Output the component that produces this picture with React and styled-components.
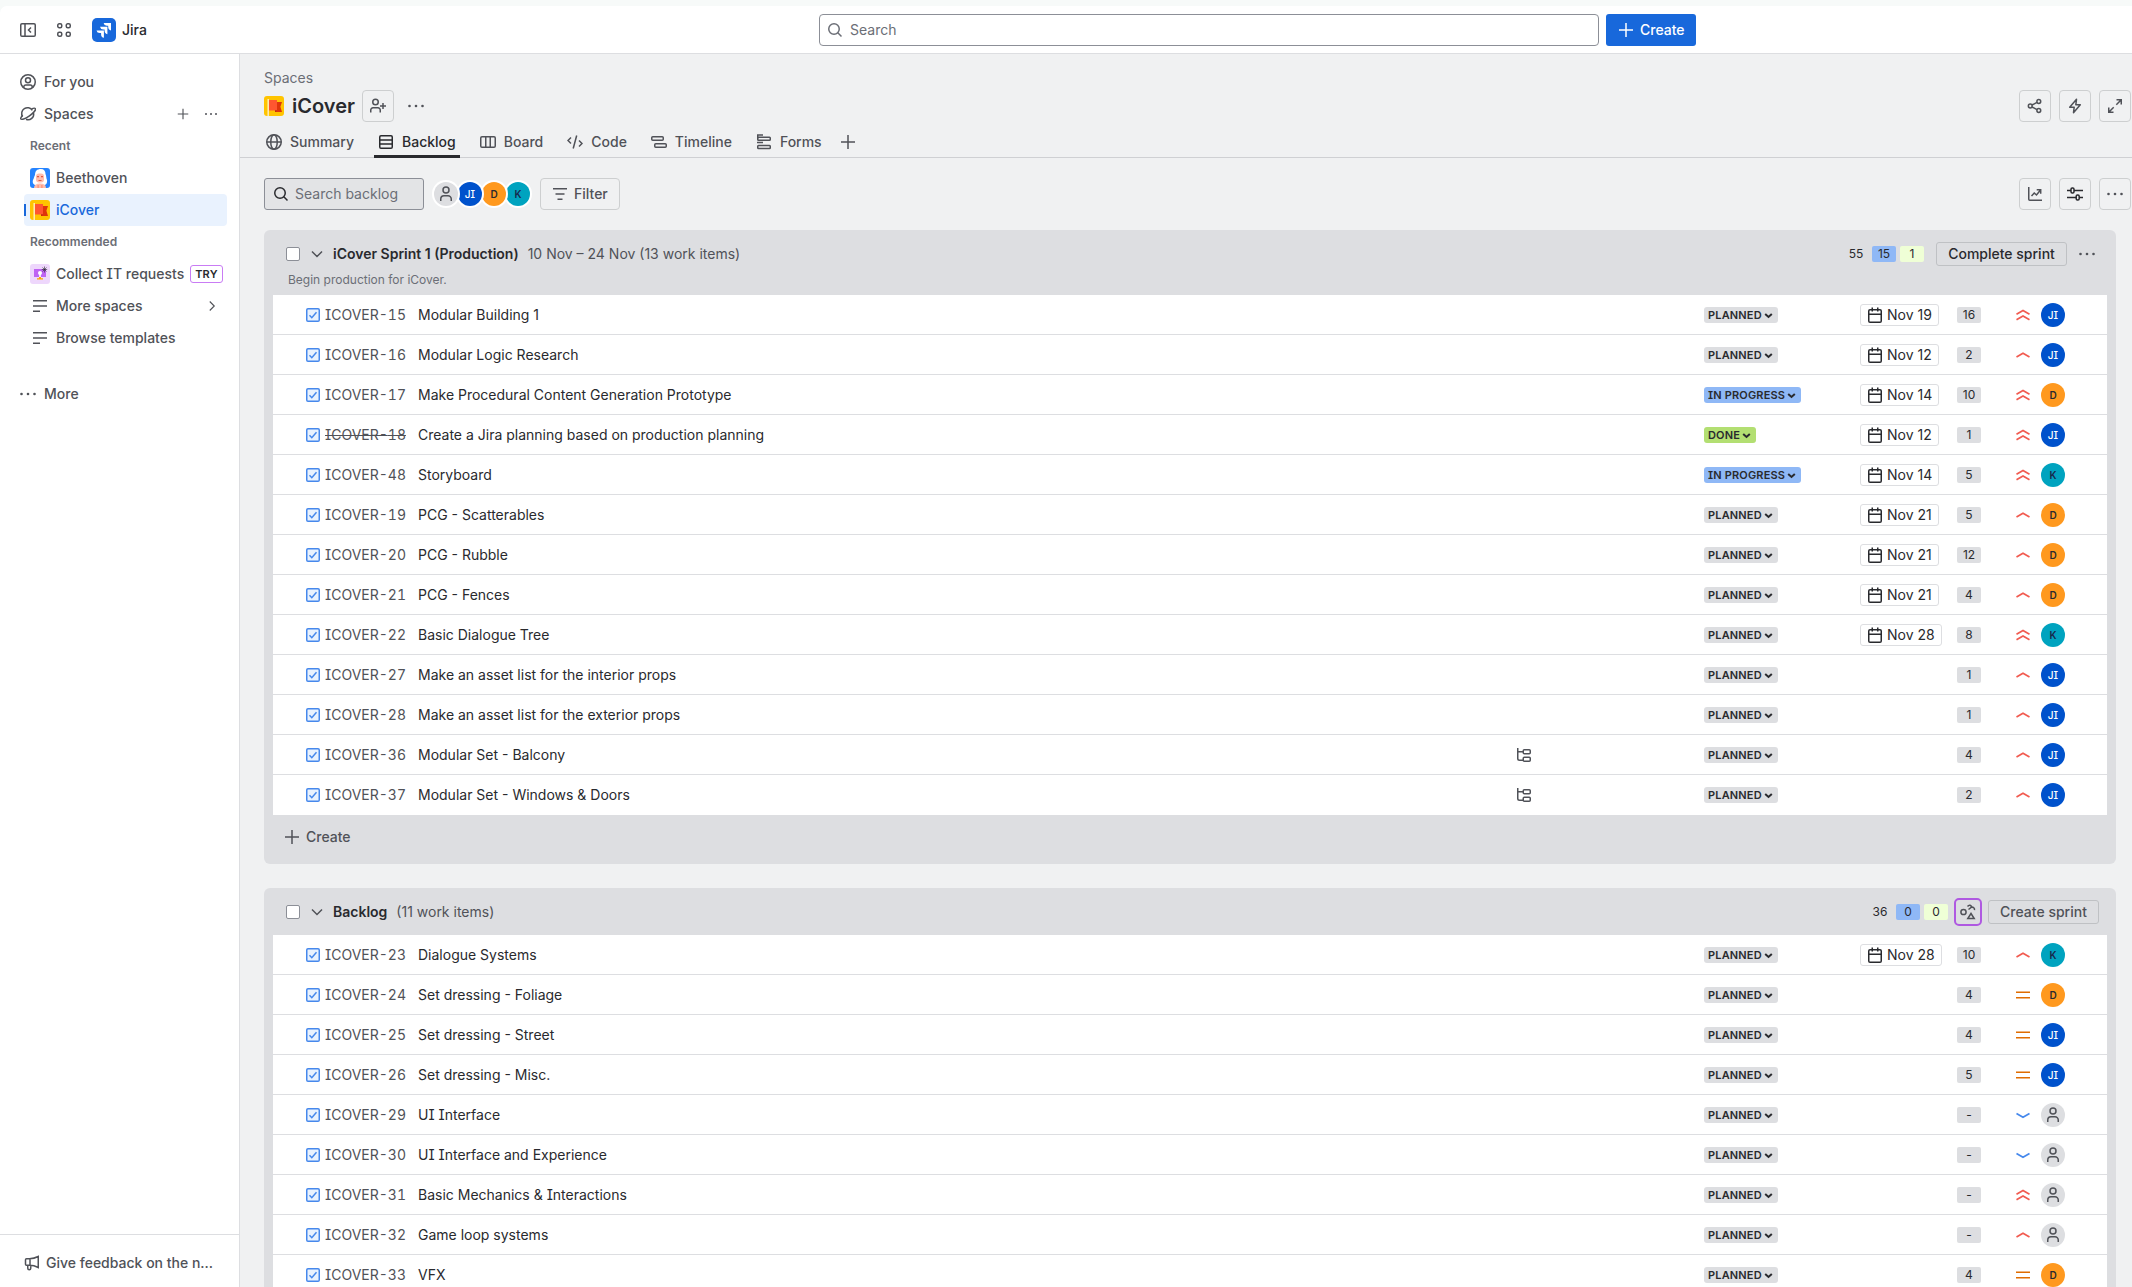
import React from 'react'
import styled, { createGlobalStyle } from 'styled-components'


const GlobalStyle = createGlobalStyle`
    * {
        box-sizing: border-box;
    }
    body {
        margin: 0;
        overflow: hidden;
        background: #f7faf9;
        color: #292a2e;
        font: 400 14px/20px Inter, sans-serif;
        font-feature-settings: "cv08";
    }
    button {
        font: inherit;
        font-feature-settings: inherit;
    }
`
const Page = styled.div`
    height: 100vh;
    padding-top: 6px;
    display: flex;
    flex-direction: column;
`
const Svg = styled.svg`
    display: block;
    flex: none;
    fill: none;
    stroke: ${p => p.$stroke || 'currentColor'};
    stroke-width: ${p => p.$weight || 1.5};
`

/* ---------- top bar ---------- */
const TopBar = styled.header`
    flex: none;
    height: 48px;
    display: grid;
    grid-template-columns: 819px 780px 1fr;
    align-items: center;
    background: #fff;
    border-bottom: 1px solid #dddee1;
    border-top-left-radius: 7px;
`
const TopLeft = styled.div`
    display: flex;
    align-items: center;
    padding-left: 20px;
    color: #505258;
`
const GridIconWrap = styled.div`
    margin: 0 20px;
`
const Logo = styled.div`
    display: flex;
    align-items: center;
    gap: 6px;
    color: #292a2e;
    font-weight: 500;
`
const GlobalSearch = styled.div`
    height: 32px;
    display: flex;
    align-items: center;
    gap: 7px;
    padding-left: 7px;
    border: 1px solid #8c8f97;
    border-radius: 4px;
    color: #6b6e76;
`
const CreateButton = styled.button`
    width: 90px;
    height: 32px;
    margin-left: 7px;
    padding: 0 0 0 12px;
    display: flex;
    align-items: center;
    gap: 6px;
    border: 0;
    border-radius: 3px;
    background: #1868db;
    color: #fff;
    font-weight: 500;
`

/* ---------- sidebar ---------- */
const Body = styled.div`
    flex: 1;
    min-height: 0;
    display: flex;
`
const Sidebar = styled.nav`
    width: 240px;
    flex: none;
    display: flex;
    flex-direction: column;
    background: #fff;
    border-right: 1px solid #dddee1;
    color: #505258;
    font-weight: 500;
    white-space: nowrap;
`
const SideList = styled.div`
    flex: 1;
    padding: 12px 12px 0;
`
const SideItem = styled.div`
    height: 32px;
    display: flex;
    align-items: center;
    gap: 8px;
    padding-left: 8px;
    margin-top: ${p => p.$gap || 0}px;
`
const SideActions = styled.div`
    display: flex;
    align-items: center;
    gap: 16px;
    margin-left: auto;
    padding-right: 10px;
`
const SideHeading = styled.div`
    height: 32px;
    padding-left: 18px;
    font-size: 12px;
    font-weight: 600;
    line-height: 32px;
    color: #6b6e76;
`
const SubItem = styled.div`
    height: 32px;
    margin-left: 12px;
    padding-right: 4px;
    display: flex;
    align-items: center;
    border-radius: 4px;
    background: ${p => (p.$active ? '#e9f2fe' : 'transparent')};
    color: ${p => (p.$active ? '#1868db' : 'inherit')};
`
const ActiveBar = styled.div`
    width: 2px;
    height: 12px;
    background: ${p => (p.$on ? '#1868db' : 'transparent')};
`
const SubIcon = styled.div`
    width: 20px;
    margin: 0 6px 0 4px;
    display: flex;
    justify-content: center;
`
const Try = styled.span`
    height: 18px;
    margin-left: 6px;
    padding: 0 4px;
    border: 1px solid #c97cf4;
    border-radius: 3px;
    color: #292a2e;
    font-size: 11px;
    font-weight: 600;
    letter-spacing: 0.165px;
    line-height: 16px;
`
const Push = styled.div`
    margin-left: auto;
    padding-right: 5px;
`
const Feedback = styled.div`
    height: 53px;
    display: flex;
    align-items: center;
    gap: 6px;
    padding: 4px 0 0 24px;
    border-top: 1px solid #dddee1;
`

/* ---------- main ---------- */
const Main = styled.main`
    flex: 1;
    min-width: 0;
    background: #f0f1f2;
    overflow: hidden;
`
const Head = styled.div`
    padding: 14px 1px 0 24px;
`
const Crumb = styled.div`
    color: #6b6e76;
`
const TitleRow = styled.div`
    height: 36px;
    display: flex;
    align-items: center;
    color: #505258;
`
const Title = styled.h1`
    margin: 0 7px 0 8px;
    font-size: 20px;
    font-weight: 600;
    line-height: 24px;
    color: #292a2e;
`
const IconButton = styled.button`
    width: 32px;
    height: 32px;
    padding: 0;
    display: flex;
    align-items: center;
    justify-content: center;
    border: 1px solid #cdcfd0;
    border-radius: 4px;
    background: transparent;
    color: ${p => (p.$dark ? '#292a2e' : '#505258')};
`
const TitleDots = styled.div`
    margin-left: 14px;
`
const ButtonGroup = styled.div`
    display: flex;
    gap: 8px;
    margin-left: auto;
`
const Tabs = styled.div`
    height: 34px;
    display: flex;
    align-items: stretch;
    gap: 16px;
    padding-left: 22px;
    border-bottom: 1px solid #cfd0d3;
    color: #505258;
    font-weight: 500;
`
const Tab = styled.div`
    display: flex;
    align-items: center;
    gap: 8px;
    height: 34px;
    padding: 4px 4px 0;
    color: ${p => (p.$active ? '#292a2e' : 'inherit')};
    border-bottom: 3px solid ${p => (p.$active ? '#292a2e' : 'transparent')};
`
const AddTab = styled(Tab)`
    margin-left: -6px;
`
const Toolbar = styled.div`
    height: 72px;
    padding: 0 1px 0 24px;
    display: flex;
    align-items: center;
`
const BacklogSearch = styled.div`
    width: 160px;
    height: 32px;
    display: flex;
    align-items: center;
    gap: 6px;
    padding-left: 8px;
    border: 1px solid #8c8f97;
    border-radius: 3px;
    background: #e3e4e6;
    color: #6b6e76;
`
const SearchGlyph = styled.span`
    color: #292a2e;
`
const AvatarStack = styled.div`
    display: flex;
    margin: 0 12px 0 8px;
    isolation: isolate;
`
const AvatarRing = styled.div`
    position: relative;
    z-index: ${p => p.$z};
    margin-right: -4px;
    padding: 2px;
    border-radius: 50%;
    background: #fff;

    &:last-child {
        margin-right: 8px;
    }
`
const Avatar = styled.div`
    width: 24px;
    height: 24px;
    display: flex;
    align-items: center;
    justify-content: center;
    border-radius: 50%;
    background: ${p => p.$bg};
    color: ${p => p.$fg};
    font-size: 10px;
    font-weight: ${p => p.$weight};
    line-height: 24px;
`
const FilterButton = styled.button`
    width: 80px;
    height: 32px;
    margin-left: -12px;
    padding: 0 0 0 11px;
    display: flex;
    align-items: center;
    gap: 6px;
    border: 1px solid #cdcfd0;
    border-radius: 4px;
    background: transparent;
    color: #505258;
    font-weight: 500;
`

/* ---------- sprint panels ---------- */
const Panel = styled.section`
    margin: 0 16px 24px 24px;
    padding: 0 9px;
    border-radius: 6px;
    background: #dddee1;
`
const PanelHead = styled.div`
    height: ${p => (p.$tall ? 65 : 47)}px;
    padding: 12px 8px 0 13px;
`
const PanelLine = styled.div`
    height: 24px;
    display: flex;
    align-items: center;
    color: #505258;
`
const Checkbox = styled.div`
    width: 14px;
    height: 14px;
    border: 1px solid #8c8f97;
    border-radius: 2px;
    background: #fff;
`
const PanelToggle = styled.div`
    margin: 0 8px 0 9px;
`
const PanelTitle = styled.span`
    margin-right: 9px;
    color: #292a2e;
    font-weight: 600;
`
const Goal = styled.div`
    padding: 4px 0 0 2px;
    color: #6b6e76;
    font-size: 12px;
`
const Stats = styled.div`
    display: flex;
    align-items: center;
    gap: 4px;
    margin-left: auto;
`
const Count = styled.span`
    min-width: 24px;
    height: 16px;
    padding: 0 4px;
    border-radius: 2px;
    background: ${p => p.$bg || 'transparent'};
    color: #292a2e;
    font-size: 12px;
    line-height: 16px;
    text-align: center;
`
const SmallButton = styled.button`
    height: 24px;
    padding: 0;
    width: ${p => p.$w}px;
    border: 1px solid #bfc1c4;
    border-radius: 3px;
    background: transparent;
    color: ${p => (p.$dark ? '#292a2e' : '#505258')};
    font-weight: 500;
    line-height: 22px;
`
const CompleteButton = styled(SmallButton)`
    margin: 0 8px;
`
const SprintDots = styled.div`
    margin-right: 4px;
`
const AiButton = styled.div`
    width: 28px;
    height: 28px;
    margin: 0 2px;
    display: flex;
    align-items: center;
    justify-content: center;
    border: 2px solid #af59e1;
    border-radius: 5px;
`
const Row = styled.div`
    height: 40px;
    padding-left: 33px;
    display: grid;
    grid-template-columns: 19px 93px 1fr 188px 156px 97px 58px 26px 66px;
    align-items: center;
    background: #fff;
    border-bottom: 1px solid #dddee1;

    &:last-child {
        border-bottom-color: #fff;
    }
`
const Key = styled.span`
    color: #505258;
    font-feature-settings: "tnum", "cv08";
    text-decoration: ${p => (p.$done ? 'line-through' : 'none')};
    justify-self: start;
`
const Status = styled.span`
    height: 16px;
    padding: 0 4px;
    display: flex;
    align-items: center;
    justify-self: start;
    border-radius: 3px;
    background: ${p => p.$bg};
    font-size: 11px;
    font-weight: 600;
    letter-spacing: 0.165px;
    line-height: 16px;
`
const DueDate = styled.span`
    height: 22px;
    padding: 0 6px;
    display: flex;
    align-items: center;
    gap: 4px;
    justify-self: start;
    border: 1px solid #dddee1;
    border-radius: 3px;
`
const Badge = styled.span`
    width: 24px;
    height: 16px;
    border-radius: 2px;
    background: #dddee1;
    font-size: 12px;
    line-height: 16px;
    text-align: center;
`
const Dim = styled.span`
    color: #505258;
`
const AddRow = styled.div`
    height: 49px;
    padding: 0 0 6px 11px;
    display: flex;
    align-items: center;
    gap: 6px;
    color: #505258;
    font-weight: 500;
`

/* ---------- icons, all on a 16px grid ---------- */
const Icon = ({ d, size = 16, children, ...rest }) => (
  <Svg width={size} height={size} viewBox="0 0 16 16" {...rest}>
    {d && <path d={d} />}
    {children}
  </Svg>
)
const Dots = () => (
  <Icon>
    <g fill="currentColor" stroke="none">
      <circle cx="1.5" cy="8" r="1.3" />
      <circle cx="8" cy="8" r="1.3" />
      <circle cx="14.5" cy="8" r="1.3" />
    </g>
  </Icon>
)
const Plus = ({ size }) => <Icon size={size} d="M8 1v14M1 8h14" />
const Search = () => (
  <Icon>
    <circle cx="7" cy="7" r="5.25" />
    <path d="M10.8 10.8 14.5 14.5" />
  </Icon>
)
const Person = () => (
  <Icon>
    <circle cx="8" cy="4" r="3" />
    <path d="M2.75 15v-2A3.25 3.25 0 0 1 6 9.75h4A3.25 3.25 0 0 1 13.25 13v2" />
  </Icon>
)
const Lines = () => <Icon d="M1 2.75h14M1 8h14M1 13.25h7" />
const Calendar = () => (
  <Icon>
    <rect x="1.75" y="2.75" width="12.5" height="12.5" rx="1.25" />
    <path d="M1.75 7.25h12.5M5.25 .5v4M10.75 .5v4" />
  </Icon>
)
const FlagIcon = () => (
  <Svg width="20" height="20" viewBox="0 0 20 20" $stroke="none">
    <rect width="20" height="20" rx="3" fill="#ffc400" />
    <rect x="3.5" y="3" width="1.4" height="17" fill="#fff0c2" />
    <path d="M11 6h7l-1.6 4.8L18 16h-7z" fill="#de350b" />
    <path d="M5 4h8v10.5H5z" fill="#ff5630" />
    <path d="M11 14.5h2L11.5 16z" fill="#a82a08" />
  </Svg>
)
const BeethovenIcon = () => (
  <Svg width="20" height="20" viewBox="0 0 20 20" $stroke="none">
    <rect width="20" height="20" rx="3" fill="#2684ff" />
    <path d="M5 7c0-4 2-6 6-6 3 0 4.5 2 4.5 5 1 2 .5 4 1.5 6 .5 3-1 5-3 5H6c-2 0-4-2-3-5 1-2 1-3 2-5z" fill="#fff" />
    <rect x="6" y="5.5" width="8" height="9" rx="3" fill="#ffbdad" />
    <path d="M7 8h2v1.2H7zM11 8h2v1.2h-2zM8.5 12h3v.9h-3z" fill="#de5a43" />
    <path d="M4 20c0-3 2-4.5 6-4.5s6 1.5 6 4.5z" fill="#ffbdad" />
    <path d="M7.5 17h1.2v3H7.5zM11.3 17h1.2v3h-1.2z" fill="#ff8f73" />
  </Svg>
)
const ItIcon = () => (
  <Svg width="20" height="20" viewBox="0 0 20 20" $stroke="none">
    <rect width="20" height="20" rx="3" fill="#eed7fc" />
    <rect x="4" y="5" width="12" height="8" fill="#bf63f3" />
    <circle cx="10" cy="9" r="2" fill="#fff" />
    <path d="M9.2 10h1.6v3.5H9.2z" fill="#fff" />
    <path d="M9 13h2v1.2h2v1.3H7v-1.3h2z" fill="#fca700" />
    <path d="M14.5 2.5v6M11.8 5.5h5.4M12.5 3.5l4 4M16.5 3.5l-4 4" stroke="#292a2e" strokeWidth=".6" />
  </Svg>
)
const PRIORITY = {
  highest: ['#f15b50', 'M1.5 7.2 8 3.4l6.5 3.8M1.5 12.7 8 8.9l6.500 3.8'],
  high: ['#f15b50', 'M1.5 10 8 6.2l6.5 3.8'],
  medium: ['#e06c00', 'M1 5.25h14M1 10.75h14'],
  low: ['#4688ec', 'M1.5 6.5 8 10.3l6.5-3.8'],
}
const Priority = ({ level }) => {
  const [color, d] = PRIORITY[level]
  return <Icon d={d} $stroke={color} $weight={1.7} />
}

const PEOPLE = {
  JI: ['#0052cc', '#fff', 500],
  D: ['#ff991f', '#292a2e', 600],
  K: ['#00a3bf', '#172b4d', 600],
  none: ['#dddee1', '#505258', 400],
}
const Assignee = ({ who }) => {
  const [bg, fg, weight] = PEOPLE[who]
  return (
    <Avatar $bg={bg} $fg={fg} $weight={weight}>
      {who === 'none' ? <Person /> : who}
    </Avatar>
  )
}

const STATUS = { PLANNED: '#dddee1', 'IN PROGRESS': '#8fb8f6', DONE: '#b3df72' }

const sprint = [
  [15, 'Modular Building 1', 'PLANNED', 'Nov 19', 16, 'highest', 'JI'],
  [16, 'Modular Logic Research', 'PLANNED', 'Nov 12', 2, 'high', 'JI'],
  [17, 'Make Procedural Content Generation Prototype', 'IN PROGRESS', 'Nov 14', 10, 'highest', 'D'],
  [18, 'Create a Jira planning based on production planning', 'DONE', 'Nov 12', 1, 'highest', 'JI'],
  [48, 'Storyboard', 'IN PROGRESS', 'Nov 14', 5, 'highest', 'K'],
  [19, 'PCG - Scatterables', 'PLANNED', 'Nov 21', 5, 'high', 'D'],
  [20, 'PCG - Rubble', 'PLANNED', 'Nov 21', 12, 'high', 'D'],
  [21, 'PCG - Fences', 'PLANNED', 'Nov 21', 4, 'high', 'D'],
  [22, 'Basic Dialogue Tree', 'PLANNED', 'Nov 28', 8, 'highest', 'K'],
  [27, 'Make an asset list for the interior props', 'PLANNED', '', 1, 'high', 'JI'],
  [28, 'Make an asset list for the exterior props', 'PLANNED', '', 1, 'high', 'JI'],
  [36, 'Modular Set - Balcony', 'PLANNED', '', 4, 'high', 'JI', true],
  [37, 'Modular Set - Windows & Doors', 'PLANNED', '', 2, 'high', 'JI', true],
]
const backlog = [
  [23, 'Dialogue Systems', 'PLANNED', 'Nov 28', 10, 'high', 'K'],
  [24, 'Set dressing - Foliage', 'PLANNED', '', 4, 'medium', 'D'],
  [25, 'Set dressing - Street', 'PLANNED', '', 4, 'medium', 'JI'],
  [26, 'Set dressing - Misc.', 'PLANNED', '', 5, 'medium', 'JI'],
  [29, 'UI Interface', 'PLANNED', '', '-', 'low', 'none'],
  [30, 'UI Interface and Experience', 'PLANNED', '', '-', 'low', 'none'],
  [31, 'Basic Mechanics & Interactions', 'PLANNED', '', '-', 'highest', 'none'],
  [32, 'Game loop systems', 'PLANNED', '', '-', 'high', 'none'],
  [33, 'VFX', 'PLANNED', '', 4, 'medium', 'D'],
]

const Issues = ({ items }) => (
  <div>
    {items.map(([id, title, status, due, points, level, who, children]) => (
      <Row key={id}>
        <Svg width="14" height="14" viewBox="0 0 14 14" $stroke="#4688ec">
          <rect x=".75" y=".75" width="12.5" height="12.5" rx="1.25" fill="#e9f2fe" />
          <path d="m3.5 7.300 2.3 2.4 4.7-5.5" />
        </Svg>
        <Key $done={status === 'DONE'}>ICOVER-{id}</Key>
        <span>{title}</span>
        <Dim>
          {children && (
            <Icon>
              <path d="M1.75 1v10.5a1.75 1.75 0 0 0 1.75 1.75H7M1.75 4.75H7" />
              <rect x="7.25" y="2.75" width="7" height="4" rx="1" />
              <rect x="7.25" y="10.25" width="7" height="4" rx="1" />
            </Icon>
          )}
        </Dim>
        <Status $bg={STATUS[status]}>
          {status}
          <Svg width="12" height="12" viewBox="0 0 12 12" $weight={2}>
            <path d="m3.200 5 3.300 3 3.300-3" />
          </Svg>
        </Status>
        {due ? <DueDate><Calendar />{due}</DueDate> : <span />}
        <Badge>{points}</Badge>
        <Priority level={level} />
        <Assignee who={who} />
      </Row>
    ))}
  </div>
)

const PanelChevron = () => (
  <PanelToggle>
    <Icon d="m3 5.5 5 5 5-5" />
  </PanelToggle>
)

const App = () => {
  return (
    <Page>
      <GlobalStyle />
      <TopBar>
        <TopLeft>
          <Icon>
            <rect x=".75" y="1.75" width="14.5" height="12.5" rx="1.25" />
            <path d="M5 1.75v12.5M11 5.5 8.5 8l2.5 2.5" />
          </Icon>
          <GridIconWrap>
            <Icon>
              <rect x="1.75" y="1.75" width="4" height="4" rx="1.5" />
              <rect x="10.25" y="1.75" width="4" height="4" rx="1.5" />
              <rect x="1.75" y="10.25" width="4" height="4" rx="1.5" />
              <rect x="10.25" y="10.25" width="4" height="4" rx="1.5" />
            </Icon>
          </GridIconWrap>
          <Logo>
            <Svg width="24" height="24" viewBox="0 0 24 24" $stroke="none">
              <rect width="24" height="24" rx="5" fill="#1868db" />
              <g fill="#fff">
                <path d="M11.6 5H19v7.6a3.600 3.600 0 0 1-2.8-3.5V7.8h-1.400A3.400 3.400 0 0 1 11.6 5z" />
                <path d="M8 8.800h7.400v7.400a3.500 3.500 0 0 1-2.8-3.4v-1.300h-1.400A3.300 3.300 0 0 1 8 8.800z" />
                <path d="M4.500 12.400h7.400v7.400a3.500 3.500 0 0 1-2.8-3.4V15H7.700a3.300 3.300 0 0 1-3.200-2.600z" />
              </g>
            </Svg>
            Jira
          </Logo>
        </TopLeft>
        <GlobalSearch>
          <Search />
          Search
        </GlobalSearch>
        <CreateButton>
          <Plus />
          Create
        </CreateButton>
      </TopBar>

      <Body>
        <Sidebar>
          <SideList>
            <SideItem>
              <Icon>
                <circle cx="8" cy="8" r="7.25" />
                <circle cx="8" cy="6.25" r="2.5" />
                <path d="M3.75 13.5v-.5a2 2 0 0 1 2-2h4.5a2 2 0 0 1 2 2v.5" />
              </Icon>
              For you
            </SideItem>
            <SideItem>
              <Icon>
                <path d="M2.6 10.5A5.6 5.6 0 0 1 12.3 4.3M13.5 6.800A5.6 5.6 0 0 1 6 13.3" />
                <path d="M11.5 3c2-.9 3.4-1 3.8-.4.8 1.3-2 4.7-6.2 7.5-4 2.700-7.700 3.900-8.300 2.800-.3-.7.3-2 1.7-3.500" />
              </Icon>
              Spaces
              <SideActions>
                <Plus size={12} />
                <Svg width="12" height="16" viewBox="0 0 12 16">
                  <path d="M0 8h2M5 8h2M10 8h2" />
                </Svg>
              </SideActions>
            </SideItem>
            <SideHeading>Recent</SideHeading>
            <SubItem>
              <ActiveBar />
              <SubIcon><BeethovenIcon /></SubIcon>
              Beethoven
            </SubItem>
            <SubItem $active>
              <ActiveBar $on />
              <SubIcon><FlagIcon /></SubIcon>
              iCover
            </SubItem>
            <SideHeading>Recommended</SideHeading>
            <SubItem>
              <ActiveBar />
              <SubIcon><ItIcon /></SubIcon>
              Collect IT requests
              <Try>TRY</Try>
            </SubItem>
            <SubItem>
              <ActiveBar />
              <SubIcon><Lines /></SubIcon>
              More spaces
              <Push>
                <Icon size={12} d="m5 2 6 6-6 6" />
              </Push>
            </SubItem>
            <SubItem>
              <ActiveBar />
              <SubIcon><Lines /></SubIcon>
              Browse templates
            </SubItem>
            <SideItem $gap={24}>
              <Dots />
              More
            </SideItem>
          </SideList>
          <Feedback>
            <Icon>
              <path d="M5.5 3.75h-3a1 1 0 0 0-1 1v4.5a1 1 0 0 0 1 1h3c3 0 5.5.5 8.750 2.250v-11C11 3.250 8.500 3.750 5.500 3.750zM6 3.750v6.500M3.750 10.500v2.750a1.500 1.500 0 0 0 3 0V10.500" />
            </Icon>
            Give feedback on the n...
          </Feedback>
        </Sidebar>

        <Main>
          <Head>
            <Crumb>Spaces</Crumb>
            <TitleRow>
              <FlagIcon />
              <Title>iCover</Title>
              <IconButton>
                <Icon>
                  <circle cx="5.5" cy="4" r="2.75" />
                  <path d="M.75 14.5V12A2.25 2.25 0 0 1 3 9.75h5A2.25 2.25 0 0 1 10.25 12v2.5M13 5v6M10 8h6" />
                </Icon>
              </IconButton>
              <TitleDots><Dots /></TitleDots>
              <ButtonGroup>
                <IconButton>
                  <Icon>
                    <circle cx="3.25" cy="8" r="1.9" />
                    <circle cx="11.8" cy="3.5" r="1.9" />
                    <circle cx="11.8" cy="12.5" r="1.9" />
                    <path d="m5 7 5-2.7M5 9l5 2.7" />
                  </Icon>
                </IconButton>
                <IconButton>
                  <Icon d="M9.5 1.3 2.7 9.2h4.5l-.7 5.5 6.8-7.9H8.8z" strokeLinejoin="round" />
                </IconButton>
                <IconButton>
                  <Icon d="M9.5 1.75h4.75V6.5M14 2 9.3 6.7M6.5 14.25H1.75V9.5M2 14l4.7-4.7" />
                </IconButton>
              </ButtonGroup>
            </TitleRow>
          </Head>
          <Tabs>
            <Tab>
              <Icon>
                <circle cx="8" cy="8" r="7.25" />
                <ellipse cx="8" cy="8" rx="3.25" ry="7.25" />
                <path d="M.75 8h14.5" />
              </Icon>
              Summary
            </Tab>
            <Tab $active>
              <Icon>
                <rect x="1.75" y="1.75" width="12.5" height="12.5" rx="1.25" />
                <path d="M1.75 6h12.5M1.75 10h12.5" />
              </Icon>
              Backlog
            </Tab>
            <Tab>
              <Icon>
                <rect x=".75" y="2.75" width="14.5" height="10.5" rx="1.25" />
                <path d="M5.75 2.75v10.5M10.25 2.75v10.5" />
              </Icon>
              Board
            </Tab>
            <Tab>
              <Icon d="M9.7 1.5 6.2 14.5M4 3.500 1 6.500l3 3M12 6.500l3 3-3 3" />
              Code
            </Tab>
            <Tab>
              <Icon>
                <rect x=".75" y="2.75" width="11.5" height="3.5" rx="1" />
                <rect x="3.75" y="9.75" width="11.5" height="3.5" rx="1" />
              </Icon>
              Timeline
            </Tab>
            <Tab>
              <Icon>
                <path d="M1 1h6M1 8.500h6M1.750 .5v4" />
                <rect x="1.75" y="3.25" width="12.5" height="3" rx=".75" />
                <rect x="1.75" y="11.5" width="12.5" height="3" rx=".75" />
              </Icon>
              Forms
            </Tab>
            <AddTab><Plus /></AddTab>
          </Tabs>
          <Toolbar>
            <BacklogSearch>
              <SearchGlyph><Search /></SearchGlyph>
              Search backlog
            </BacklogSearch>
            <AvatarStack>
              {['none', 'JI', 'D', 'K'].map((who, i) => (
                <AvatarRing key={who} $z={4 - i}>
                  <Assignee who={who} />
                </AvatarRing>
              ))}
            </AvatarStack>
            <FilterButton>
              <Icon d="M1 2.75h14M3.5 8h9M5.5 13.25h5" />
              Filter
            </FilterButton>
            <ButtonGroup>
              <IconButton>
                <Icon d="M1.75 1v12.25a1 1 0 0 0 1 1H15M4.5 10l2.75-3 2.25 2L13.5 4M9.700 3.750h4v4" />
              </IconButton>
              <IconButton $dark>
                <Icon>
                  <rect x="4" y="2" width="3" height="5" rx="1.2" />
                  <rect x="9.2" y="9" width="3" height="5" rx="1.2" />
                  <path d="M0 4.5h4M7 4.5h9M0 11.5h9.2M12.2 11.5H16" />
                </Icon>
              </IconButton>
              <IconButton><Dots /></IconButton>
            </ButtonGroup>
          </Toolbar>

          <Panel>
            <PanelHead $tall>
              <PanelLine>
                <Checkbox />
                <PanelChevron />
                <PanelTitle>iCover Sprint 1 (Production)</PanelTitle>
                10 Nov – 24 Nov (13 work items)
                <Stats>
                  <Count>55</Count>
                  <Count $bg="#8fb8f6">15</Count>
                  <Count $bg="#efffd6">1</Count>
                  <CompleteButton $w={131} $dark>Complete sprint</CompleteButton>
                  <SprintDots><Dots /></SprintDots>
                </Stats>
              </PanelLine>
              <Goal>Begin production for iCover.</Goal>
            </PanelHead>
            <Issues items={sprint} />
            <AddRow><Plus />Create</AddRow>
          </Panel>

          <Panel>
            <PanelHead>
              <PanelLine>
                <Checkbox />
                <PanelChevron />
                <PanelTitle>Backlog</PanelTitle>
                (11 work items)
                <Stats>
                  <Count>36</Count>
                  <Count $bg="#8fb8f6">0</Count>
                  <Count $bg="#efffd6">0</Count>
                  <AiButton>
                    <Icon>
                      <circle cx="3.5" cy="8" r="2.6" />
                      <path d="m11 9.5 3.2 5H7.8zM7.5 2.500C9 .6 11.500 1 11.300 3.200c2-.4 3.500 1 3.200 3M8.500 5.500l3-2.300" />
                    </Icon>
                  </AiButton>
                  <SmallButton $w={111}>Create sprint</SmallButton>
                </Stats>
              </PanelLine>
            </PanelHead>
            <Issues items={backlog} />
          </Panel>
        </Main>
      </Body>
    </Page>
  )
}

export default App
